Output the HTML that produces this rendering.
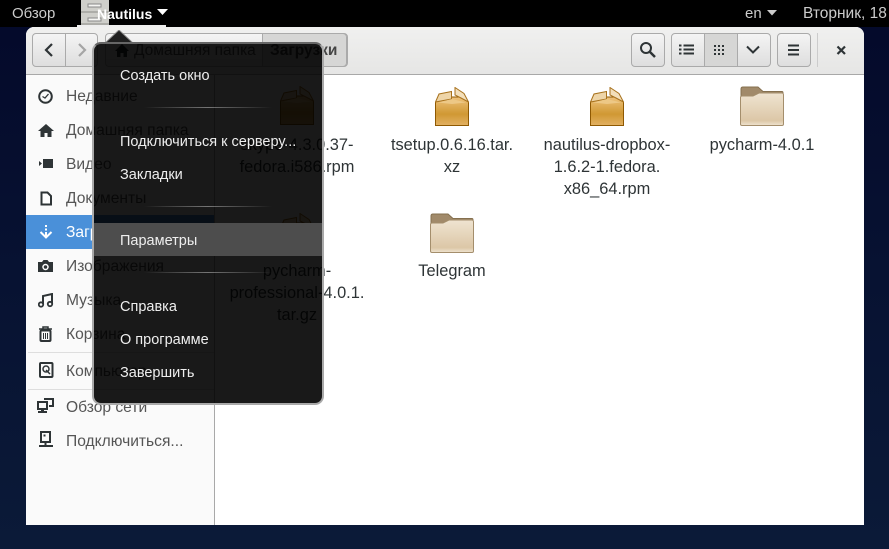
<!DOCTYPE html>
<html><head><meta charset="utf-8"><style>
*{box-sizing:border-box}
html,body{margin:0;padding:0;width:889px;height:549px;overflow:hidden}
body{position:relative;background:linear-gradient(180deg,#04092a 0,#071232 50%,#0b1a38 100%);font-family:"Liberation Sans","DejaVu Sans",sans-serif}
.a{position:absolute}
.t{position:absolute;white-space:nowrap;line-height:20px;height:20px}
#bar{left:0;top:0;width:889px;height:27px;background:#000;overflow:hidden}
#bar .t{color:#ccc;font-size:15px;top:4px}
#win{left:26px;top:27px;width:838px;height:498px;background:#fff;border-radius:8px 8px 0 0;overflow:hidden}
#hd{left:0;top:0;width:838px;height:48px;background:linear-gradient(#f0f0ef,#e6e6e5);border-bottom:1px solid #a8a8a8}
#sb{left:0;top:48px;width:189px;height:450px;background:#fafafa;border-right:1px solid #a9a9a9}
.btn{position:absolute;top:6px;height:34px;border:1px solid #aaa;border-radius:4px;background:linear-gradient(#f4f4f4,#dedede)}
.s{color:#555;font-size:15.6px;left:40px}
.f{position:absolute;width:150px;text-align:center;color:#2e3436;font-size:16.4px;line-height:22px;white-space:nowrap}
#menu{left:92px;top:42px;width:232px;height:363px;background:rgba(0,0,0,.9);border:2px solid #a9a9a9;border-top-color:#666;border-radius:9px}
.m{color:#eee;font-size:14.5px;left:26px}
.sep{position:absolute;left:50px;width:128px;height:1px;background:linear-gradient(90deg,rgba(255,255,255,0),rgba(255,255,255,.4),rgba(255,255,255,0))}
.i{position:absolute}
</style></head><body>
<svg width="0" height="0" style="position:absolute"><defs>
<linearGradient id="bx" x1="0" y1="0" x2="0" y2="1"><stop offset="0" stop-color="#eec27c"/><stop offset=".6" stop-color="#d09833"/><stop offset="1" stop-color="#e2b163"/></linearGradient>
<linearGradient id="fd" x1="0" y1="0" x2="0" y2="1"><stop offset="0" stop-color="#efe4d1"/><stop offset=".85" stop-color="#dcc7a7"/><stop offset="1" stop-color="#efe3d0"/></linearGradient>
<symbol id="box" viewBox="0 0 34 40">
<path d="M.5 15 L.5 38.500 L33.500 38.500 L33.500 15 L26 10 L9 10Z" fill="url(#bx)" stroke="#8f5902"/>
<path d="M.5 15 L4 7 L16.500 4.500 L16.500 12 L.5 15Z" fill="#eed5a8" stroke="#a8721d"/>
<path d="M20 .5 L29 6.500 L33.500 15 L26 11 L20 8Z" fill="#f3dfba" stroke="#a8721d"/>
<path d="M3 15.500 L17 12 L31 15.500 L17 17Z" fill="#edc886"/>
</symbol>
<symbol id="folder" viewBox="0 0 44 40">
<path d="M1 3 Q1 1 3 1 L18 1 L23 5.500 L42 5.500 Q43 5.500 43 7 L43 20 L1 20Z" fill="#a18a6a" stroke="#85704f"/>
<path d="M.5 38 L.5 11.500 Q.5 10 2 10 L13 10 L19 7 L42 7 Q43.500 7 43.500 9 L43.500 38 Q43.500 39.500 42 39.500 L2 39.500 Q.5 39.500 .5 38Z" fill="url(#fd)" stroke="#a48e6c"/>
</symbol>
</defs></svg>

<div class="a" id="bar">
<div class="t" style="left:12px">Обзор</div>
<svg class="a" style="left:78px;top:0" width="34" height="27"><path d="M3 0 H31 V25 H3Z" fill="#cfcfca"/><path d="M3 12 H31 M3 24 H31" stroke="#8b8b86"/><rect x="10" y="4" width="13" height="3" fill="#f5f5f2" stroke="#888"/><rect x="10" y="18" width="13" height="3" fill="#f5f5f2" stroke="#888"/></svg>
<div class="a" style="left:77px;top:25px;width:89px;height:2px;background:#eee"></div>
<div class="t" style="left:97px;color:#fff;font-weight:bold;font-size:14px">Nautilus</div>
<svg class="a" style="left:157px;top:9px" width="11" height="7"><path d="M0 0H11L5.500 6Z" fill="#fff"/></svg>
<div class="t" style="left:745px">en</div>
<svg class="a" style="left:767px;top:10px" width="10" height="6"><path d="M0 0H10L5 5.500Z" fill="#ccc"/></svg>
<div class="t" style="left:803px;font-size:15.5px">Вторник, 18</div>
</div>

<div class="a" id="win">
<div class="a" id="hd">
<div class="btn" style="left:6px;width:66px"></div>
<div class="a" style="left:39px;top:7px;width:1px;height:32px;background:#aaa"></div>
<svg class="i" style="left:16px;top:15px" width="14" height="16"><path d="M10 2 L4 8 L10 14" fill="none" stroke="#2e3436" stroke-width="2.200"/></svg>
<svg class="i" style="left:49px;top:15px" width="14" height="16"><path d="M4 2 L10 8 L4 14" fill="none" stroke="#a5a5a5" stroke-width="2.200"/></svg>
<div class="btn" style="left:79px;width:243px"></div>
<div class="a" style="left:236px;top:6px;width:85px;height:34px;background:#d6d6d5;border:1px solid #aaa;border-radius:0 4px 4px 0"></div>
<svg class="i" style="left:88px;top:16px" width="16" height="15"><path d="M8 1 L15 8 H13 V14 H9.500 V10 H6.500 V14 H3 V8 H1Z" fill="#2e3436"/></svg>
<div class="t" style="left:108px;top:14px;font-size:15.5px;color:#555">Домашняя папка</div>
<div class="t" style="left:244px;top:14px;font-size:15.5px;font-weight:bold;color:#444">Загрузки</div>
<div class="btn" style="left:605px;width:34px"></div>
<svg class="i" style="left:613px;top:14px" width="18" height="18"><circle cx="7" cy="7" r="5" fill="none" stroke="#2e3436" stroke-width="2"/><path d="M11 11 L16 16" stroke="#2e3436" stroke-width="2.500"/></svg>
<div class="btn" style="left:645px;width:100px"></div>
<div class="a" style="left:678px;top:6px;width:34px;height:34px;background:#d6d6d5;border:1px solid #aaa"></div>
<svg class="i" style="left:653px;top:17px" width="18" height="12"><path d="M0 1.500H2.500M4.500 1.500H15M0 5.500H2.500M4.500 5.500H15M0 9.500H2.500M4.500 9.500H15" stroke="#2e3436" stroke-width="2"/></svg>
<svg class="i" style="left:687px;top:17px" width="16" height="12" fill="#2e3436"><path d="M1 1h2v2H1zM5 1h2v2H5zM9 1h2v2H9zM1 5h2v2H1zM5 5h2v2H5zM9 5h2v2H9zM1 9h2v2H1zM5 9h2v2H5zM9 9h2v2H9z"/></svg>
<svg class="i" style="left:720px;top:18px" width="16" height="10"><path d="M1 1.500 L7 7.500 L13 1.500" fill="none" stroke="#2e3436" stroke-width="2"/></svg>
<div class="btn" style="left:751px;width:34px"></div>
<svg class="i" style="left:761px;top:17px" width="14" height="12"><path d="M1 1.500H12M1 6H12M1 10.500H12" stroke="#2e3436" stroke-width="2"/></svg>
<div class="a" style="left:791px;top:6px;width:1px;height:34px;background:#ccc"></div>
<svg class="i" style="left:810px;top:18px" width="11" height="11"><path d="M1.500 1.500 L9 9 M9 1.500 L1.500 9" stroke="#2e3436" stroke-width="2.200"/></svg>
</div>

<div class="a" id="sb">
<div class="a" style="left:0;top:140px;width:188px;height:34px;background:#4a90d9"></div>
<div class="a" style="left:2px;top:277px;width:186px;height:1px;background:#dedede"></div>
<div class="a" style="left:2px;top:314px;width:186px;height:1px;background:#dedede"></div>
<svg class="i" style="left:12px;top:14px" width="16" height="16"><circle cx="7.500" cy="7.500" r="6.300" fill="none" stroke="#2e3436" stroke-width="2"/><path d="M4.500 7.500 L7 9 L10.500 5" fill="none" stroke="#2e3436" stroke-width="1.300"/></svg>
<div class="t s" style="top:12px">Недавние</div>
<svg class="i" style="left:12px;top:48px" width="16" height="16"><path d="M8 1 L16 8 H13.500 V14 H9.500 V10 H6.500 V14 H2.500 V8 H0Z" fill="#2e3436"/></svg>
<div class="t s" style="top:46px">Домашняя папка</div>
<svg class="i" style="left:13px;top:81px" width="16" height="16"><path d="M0 5 L3 7.500 L0 10Z M4 3 H14 V12 H4Z" fill="#2e3436"/></svg>
<div class="t s" style="top:80px">Видео</div>
<svg class="i" style="left:14px;top:116px" width="14" height="16"><path d="M1.500 1.500 H7.500 L11 5 V13.500 H1.500Z" fill="#fff" stroke="#2e3436" stroke-width="2"/></svg>
<div class="t s" style="top:114px">Документы</div>
<svg class="i" style="left:13px;top:149px" width="15" height="18"><path d="M7 1v2M7 4.500v2M7 8v4" stroke="#fff" stroke-width="2"/><path d="M1.500 8 L7 13.500 L12.500 8" fill="none" stroke="#fff" stroke-width="2"/></svg>
<div class="t s" style="top:148px;color:#fff">Загрузки</div>
<svg class="i" style="left:12px;top:184px" width="16" height="15"><path d="M0 3H4L5.500 1H9.500L11 3H15V13H0Z" fill="#2e3436"/><circle cx="7.500" cy="8" r="2.500" fill="none" stroke="#fff" stroke-width="1.500"/></svg>
<div class="t s" style="top:182px">Изображения</div>
<svg class="i" style="left:12px;top:218px" width="16" height="16"><path d="M5 11V3L14 1V10" fill="none" stroke="#2e3436" stroke-width="2"/><circle cx="3" cy="11.500" r="2.200" fill="none" stroke="#2e3436" stroke-width="1.800"/><circle cx="12" cy="11" r="2.200" fill="none" stroke="#2e3436" stroke-width="1.800"/></svg>
<div class="t s" style="top:216px">Музыка</div>
<svg class="i" style="left:12px;top:251px" width="16" height="17"><path d="M1 3H14M5 2.500 V1H10V2.500" fill="none" stroke="#2e3436" stroke-width="1.500"/><rect x="2.500" y="4.500" width="10" height="10.500" rx="1" fill="none" stroke="#2e3436" stroke-width="2"/><path d="M5.500 7V13M7.500 7V13M9.500 7V13" stroke="#2e3436"/></svg>
<div class="t s" style="top:250px">Корзина</div>
<svg class="i" style="left:13px;top:287px" width="15" height="17"><rect x="1" y="1" width="12.500" height="14" rx="1" fill="none" stroke="#2e3436" stroke-width="2"/><circle cx="7" cy="7" r="3" fill="none" stroke="#2e3436" stroke-width="1.500"/><path d="M7 8 L11 12" stroke="#2e3436" stroke-width="1.500"/></svg>
<div class="t s" style="top:287px">Компьютер</div>
<svg class="i" style="left:11px;top:323px" width="18" height="16"><path d="M7 1H16V8H12" fill="none" stroke="#2e3436" stroke-width="2"/><rect x="1" y="4" width="9" height="7" fill="none" stroke="#2e3436" stroke-width="2"/><path d="M1 14H10M4 12H7" stroke="#2e3436" stroke-width="2"/></svg>
<div class="t s" style="top:323px">Обзор сети</div>
<svg class="i" style="left:12px;top:356px" width="16" height="17"><rect x="3" y="1" width="9" height="10" fill="none" stroke="#2e3436" stroke-width="2"/><path d="M7.500 11V14M1 15H15" stroke="#2e3436" stroke-width="2"/><rect x="5.500" y="3.500" width="2" height="2" fill="#2e3436"/></svg>
<div class="t s" style="top:357px">Подключиться...</div>
</div>

<svg class="i" style="left:254px;top:59px" width="34" height="40"><use href="#box"/></svg>
<div class="f" style="left:196px;top:107px">skype-4.3.0.37-<br>fedora.i586.rpm</div>
<svg class="i" style="left:409px;top:60px" width="34" height="40"><use href="#box"/></svg>
<div class="f" style="left:351px;top:107px">tsetup.0.6.16.tar.<br>xz</div>
<svg class="i" style="left:564px;top:60px" width="34" height="40"><use href="#box"/></svg>
<div class="f" style="left:506px;top:107px">nautilus-dropbox-<br>1.6.2-1.fedora.<br>x86_64.rpm</div>
<svg class="i" style="left:714px;top:59px" width="44" height="40"><use href="#folder"/></svg>
<div class="f" style="left:661px;top:107px">pycharm-4.0.1</div>
<svg class="i" style="left:254px;top:186px" width="34" height="40"><use href="#box"/></svg>
<div class="f" style="left:196px;top:233px">pycharm-<br>professional-4.0.1.<br>tar.gz</div>
<svg class="i" style="left:404px;top:186px" width="44" height="40"><use href="#folder"/></svg>
<div class="f" style="left:351px;top:233px">Telegram</div>
</div>

<svg class="a" style="left:104px;top:30px" width="30" height="14"><path d="M0 14 L15 0 L30 14Z" fill="#1f1f1f" stroke="#888"/></svg>
<div class="a" id="menu">
<div class="t m" style="top:22px">Создать окно</div>
<div class="sep" style="top:63px"></div>
<div class="t m" style="top:88px">Подключиться к серверу...</div>
<div class="t m" style="top:121px">Закладки</div>
<div class="sep" style="top:162px"></div>
<div class="a" style="left:0;top:179px;width:228px;height:33px;background:#4d4d4d"></div>
<div class="t m" style="top:187px">Параметры</div>
<div class="sep" style="top:228px"></div>
<div class="t m" style="top:253px">Справка</div>
<div class="t m" style="top:286px">О программе</div>
<div class="t m" style="top:319px">Завершить</div>
</div>
</body></html>
